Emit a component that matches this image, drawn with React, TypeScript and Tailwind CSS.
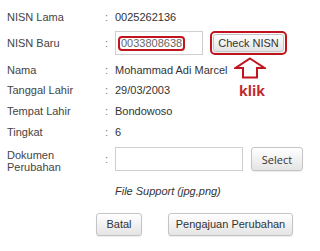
import React from 'react';

const btn =
    'border border-[#c4c4c4] rounded-[3px] bg-gradient-to-b from-[#ffffff] to-[#e4e4e4] text-[#333] shadow-[0_1px_1px_rgba(0,0,0,0.08)]';

const Row: React.FC<{ label: React.ReactNode; className?: string; children?: React.ReactNode }> = ({
    label,
    className = '',
    children
}) => (
    <div className={`flex items-center ${className}`}>
        <div className="w-[98px] shrink-0 text-[#444]">{label}</div>
        <div className="w-[10px] shrink-0 text-[#777]">:</div>
        <div className="flex items-center text-[#333]">{children}</div>
    </div>
);

export default function App() {
    return (
        <div
            className="relative w-[320px] h-[251px] bg-white pt-[5px] pl-[7px] text-[11px] leading-[13px]"
            style={{ fontFamily: '"Liberation Sans", Arial, sans-serif' }}
        >
            <Row label="NISN Lama" className="h-[24px]">0025262136</Row>

            <Row label="NISN Baru" className="mt-[1px] h-[26px]">
                <div className="w-[88px] h-[24px] border border-[#cfcfcf] bg-white flex items-center pl-[2px]">
                    <span className="border-2 border-[#c0141e] rounded-[4px] px-[1px] h-[15px] flex items-center text-[#666]">
                        0033808638
                    </span>
                </div>
                <div className="ml-[7px] border-2 border-[#c0141e] rounded-[5px] p-[1px]">
                    <div className={`${btn} w-[71px] h-[18px] flex items-center justify-center`}>Check NISN</div>
                </div>
            </Row>

            <Row label="Nama" className="mt-[3px] h-[22px]">Mohammad Adi Marcel</Row>
            <Row label="Tanggal Lahir" className="h-[18px]">29/03/2003</Row>
            <Row label="Tempat Lahir" className="h-[24px]">Bondowoso</Row>
            <Row label="Tingkat" className="h-[18px]">6</Row>

            <div className="flex items-start mt-[6px] h-[24px]">
                <div className="w-[98px] shrink-0 text-[#444] leading-[12px] pt-[2px]">
                    Dokumen
                    <br />
                    Perubahan
                </div>
                <div className="w-[10px] shrink-0 text-[#777] self-center">:</div>
                <div className="w-[128px] h-[24px] border border-[#cfcfcf] bg-white" />
                <div
                    className={`${btn} ml-[8px] w-[52px] h-[24px] flex items-center justify-center text-[11px]`}
                    style={{ fontFamily: '"Open Sans", sans-serif' }}
                >
                    Select
                </div>
            </div>

            <div className="mt-[10px] h-[21px] pl-[108px] flex items-center italic text-[#333]">
                File Support (jpg,png)
            </div>

            <div className="mt-[11px] flex pl-[89px] gap-[26px]">
                <div className={`${btn} w-[46px] h-[23px] flex items-center justify-center`}>Batal</div>
                <div className={`${btn} w-[125px] h-[23px] flex items-center justify-center`}>Pengajuan Perubahan</div>
            </div>

            {/* anotasi: panah + klik */}
            <svg className="absolute left-[234px] top-[57px]" width="32" height="22" viewBox="0 0 32 22">
                <path
                    d="M16 1.5 L30.5 11 L23 11 L23 20.5 L9 20.5 L9 11 L1.5 11 Z"
                    fill="white"
                    stroke="#c0141e"
                    strokeWidth="2"
                    strokeLinejoin="miter"
                />
            </svg>
            <div
                className="absolute left-[239px] top-[81px] text-[14px] leading-[19px] font-bold text-[#c0282d]"
                style={{ fontFamily: '"Open Sans", sans-serif' }}
            >
                klik
            </div>
        </div>
    );
}
